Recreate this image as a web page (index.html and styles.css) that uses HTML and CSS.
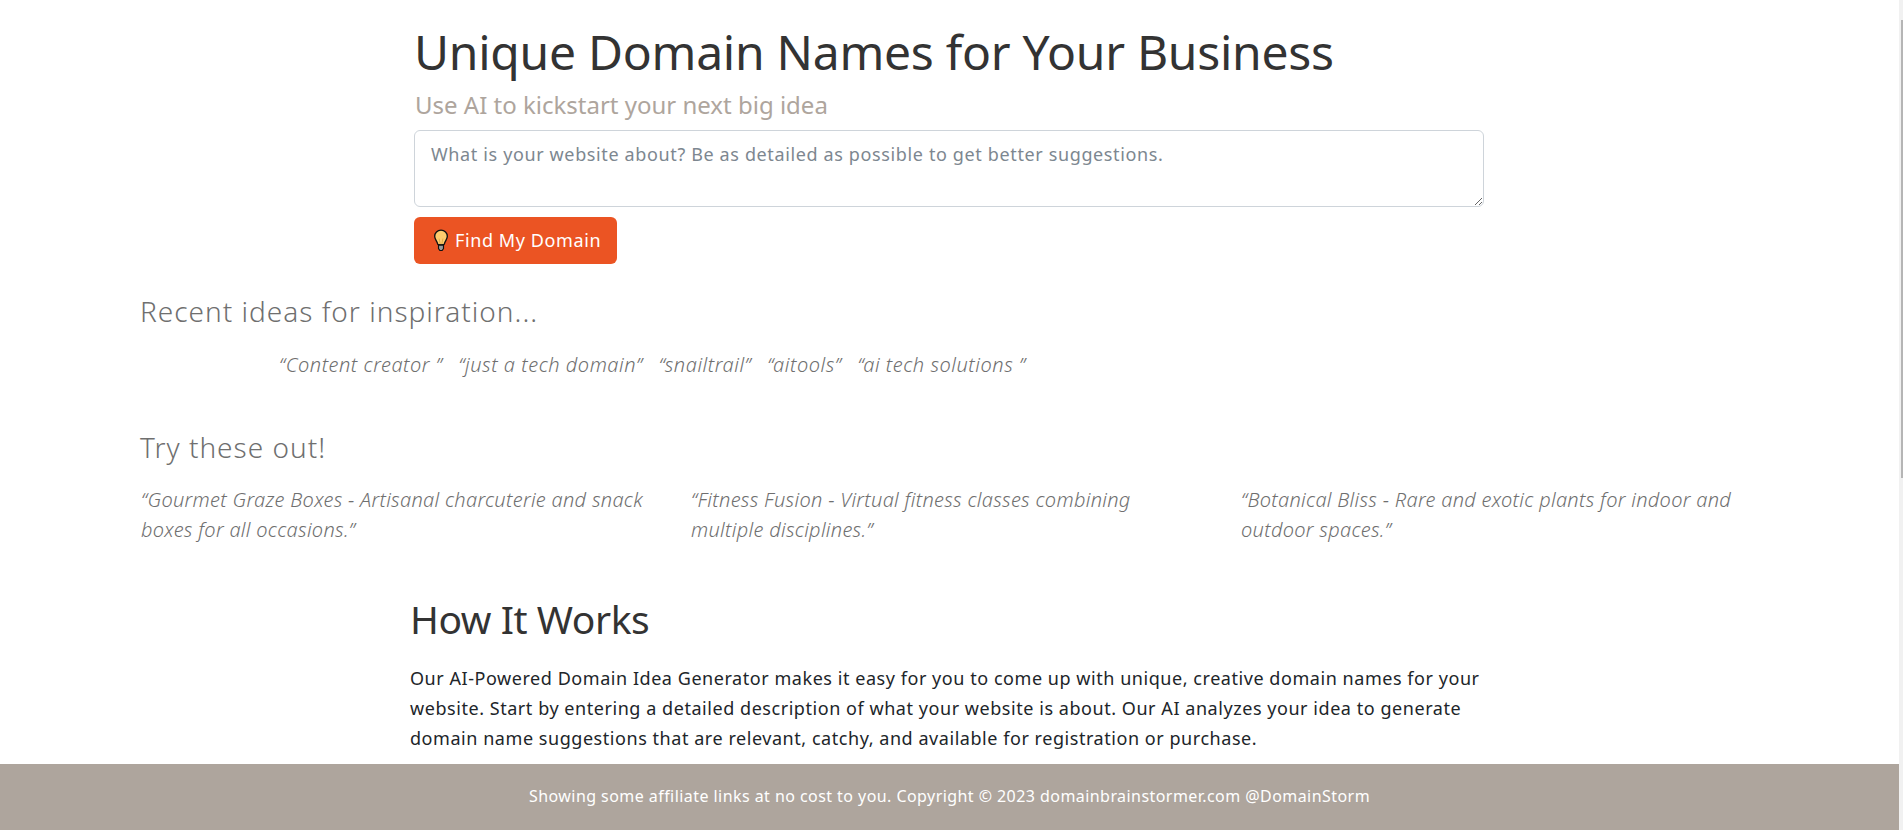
FILE: index.html
```html
<!DOCTYPE html>
<html lang="en">
<head>
<meta charset="utf-8">
<title>Domain Brainstormer</title>
<link rel="stylesheet" href="styles.css">
</head>
<body>
<main class="page">
  <section class="hero">
    <h1 class="hero-title">Unique Domain Names for Your Business</h1>
    <p class="hero-sub">Use AI to kickstart your next big idea</p>
    <textarea class="idea-input" placeholder="What is your website about? Be as detailed as possible to get better suggestions."></textarea>
    <button class="find-btn" type="button">
      <svg class="bulb" viewBox="0 0 16 24" width="16" height="23" aria-hidden="true">
        <path d="M8 1.200C4.200 1.200 1.400 4 1.400 7.600c0 3.200 2.300 4.800 3 7.600.2.800.4 1.200 1 1.200h5.200c.6 0 .8-.4 1-1.200.7-2.800 3-4.400 3-7.600C14.600 4 11.800 1.200 8 1.200z" fill="#fdcb6e" stroke="#111" stroke-width="1.400"/>
        <path d="M6 10l1.200 6M10 10l-1.200 6" stroke="#d9a441" stroke-width=".8" fill="none"/>
        <path d="M5.400 16.800h5.200v3.600l-1.400 2h-2.400l-1.400-2z" fill="#9a9a9a" stroke="#111" stroke-width="1.200"/>
      </svg>
      <span>Find My Domain</span>
    </button>
  </section>

  <section class="recent">
    <h2 class="section-title">Recent ideas for inspiration...</h2>
    <ul class="recent-list">
      <li>“Content creator ”</li>
      <li>“just a tech domain”</li>
      <li>“snailtrail”</li>
      <li>“aitools”</li>
      <li>“ai tech solutions ”</li>
    </ul>
  </section>

  <section class="try">
    <h2 class="section-title">Try these out!</h2>
    <div class="try-grid">
      <p>“Gourmet Graze Boxes - Artisanal charcuterie and snack boxes for all occasions.”</p>
      <p>“Fitness Fusion - Virtual fitness classes combining multiple disciplines.”</p>
      <p>“Botanical Bliss - Rare and exotic plants for indoor and outdoor spaces.”</p>
    </div>
  </section>

  <section class="how">
    <h2 class="how-title">How It Works</h2>
    <p>Our AI-Powered Domain Idea Generator makes it easy for you to come up with unique, creative domain names for your website. Start by entering a detailed description of what your website is about. Our AI analyzes your idea to generate domain name suggestions that are relevant, catchy, and available for registration or purchase.</p>
  </section>
</main>
<footer class="site-footer">Showing some affiliate links at no cost to you. Copyright © 2023 domainbrainstormer.com @DomainStorm</footer>
<div class="scroll-track"><div class="scroll-thumb"></div></div>
</body>
</html>
```
FILE: styles.css
```css
* { box-sizing: border-box; }
html, body { height: 100%; overflow: hidden; }
body {
  margin: 0;
  font-family: "Noto Sans", "Open Sans", sans-serif;
  color: #212529;
  background: #fff;
}
.page { padding-top: 23px; }
.hero { width: 1070px; margin-left: 414px; }
.hero-title {
  margin: 0;
  font-size: 48px;
  font-weight: 400;
  line-height: 58px;
  letter-spacing: -.27px;
  color: #333;
}
.hero-sub {
  margin: 9px 0 10px;
  font-size: 24px;
  font-weight: 400;
  line-height: 30px;
  color: #aea59d;
  padding-left: 1px;
}
.idea-input {
  display: block;
  width: 100%;
  height: 77px;
  padding: 10px 16px 6px;
  border: 1px solid #ced4da;
  border-radius: 6px;
  font: 18px/27px "Noto Sans", sans-serif;
  letter-spacing: .63px;
  color: #212529;
  outline: none;
}
.idea-input::placeholder { color: #7d8790; opacity: 1; }
.find-btn {
  display: flex;
  align-items: center;
  gap: 6px;
  width: 203px;
  height: 47px;
  margin-top: 10px;
  padding: 0 0 0 19px;
  border: 0;
  border-radius: 6px;
  background: #eb5423;
  color: #fff;
  font: 18px/27px "Noto Sans", sans-serif;
  letter-spacing: .6px;
}
.recent { margin: 30px 0 0 140px; }
.section-title {
  margin: 0;
  font-size: 28px;
  font-weight: 300;
  line-height: 34px;
  letter-spacing: 1px;
  color: #6f6f6f;
}
.recent-list {
  display: flex;
  gap: 16px;
  margin: 0;
  padding: 22px 0 0 139px;
  list-style: none;
  font-size: 20px;
  font-style: italic;
  font-weight: 300;
  line-height: 30px;
  letter-spacing: .53px;
  color: #6f6f6f;
}
.try { margin: 50px 0 0 140px; }
.try-grid {
  display: grid;
  grid-template-columns: repeat(3, 550px);
  margin-top: 21px;
  padding-left: 1px;
  font-size: 20px;
  font-style: italic;
  font-weight: 300;
  line-height: 30px;
  letter-spacing: .3px;
  color: #6f6f6f;
}
.try-grid p { margin: 0; width: 510px; }
.how { width: 1080px; margin: 50px 0 0 410px; }
.how-title {
  margin: 0 0 20px;
  font-size: 39px;
  font-weight: 400;
  line-height: 48px;
  letter-spacing: -.45px;
  color: #333;
}
.how p { margin: 0; font-size: 18px; line-height: 30px; letter-spacing: .55px; color: #212529; }
.site-footer {
  position: fixed;
  left: 0;
  right: 4px;
  bottom: 0;
  height: 66px;
  padding-bottom: 2px;
  display: flex;
  align-items: center;
  justify-content: center;
  background: #aea59d;
  color: #fff;
  font-size: 16px;
  letter-spacing: .44px;
}
.scroll-track {
  position: fixed;
  top: 0;
  right: 0;
  bottom: 0;
  width: 4px;
  background: #f1f1f1;
}
.scroll-thumb {
  width: 2px;
  height: 458px;
  margin: 20px 0 0 2px;
  background: #b5b5b5;
}
```
